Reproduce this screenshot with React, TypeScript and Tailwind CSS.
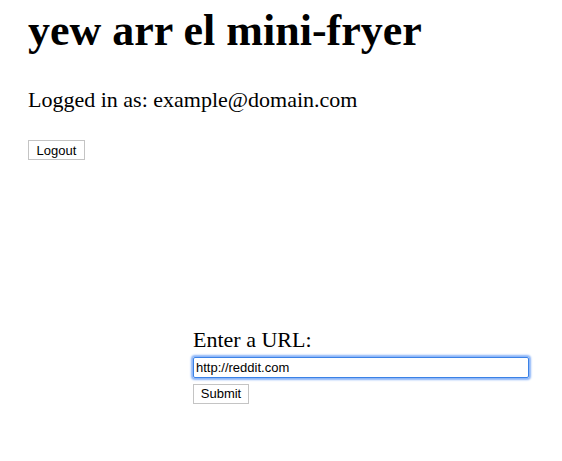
import React from "react";

const serif = "font-['Liberation_Serif','Times_New_Roman',serif]";
const sans = "font-['Liberation_Sans',Arial,sans-serif]";

const App = () => {
  return (
    <div className={`min-h-[461px] w-[562px] bg-white text-black ${serif}`}>
      <div className="pl-[28px] pt-[6px]">
        <h1 className="text-[44px] font-bold leading-[49px]">
          yew arr el mini-fryer
        </h1>
        <p className="mt-[33px] text-[22px] leading-[24px]">
          Logged in as: example@domain.com
        </p>
        <button
          className={`mt-[28px] h-[20px] w-[57px] border border-[#c4c4c4] bg-white text-[13px] leading-none ${sans}`}
        >
          Logout
        </button>
      </div>

      <form className="mt-[166px] ml-[193px] flex flex-col items-start">
        <label className="text-[22px] leading-[24px]">Enter a URL:</label>
        <input
          defaultValue="http://reddit.com"
          className={`mt-[5px] h-[21px] w-[336px] rounded-[2px] border border-[#3b82e6] px-[2px] text-[13px] shadow-[0_0_2px_2px_#8ab4f8] outline-none ${sans}`}
        />
        <button
          type="button"
          className={`mt-[6px] h-[20px] w-[56px] border border-[#c4c4c4] bg-white text-[13px] leading-none ${sans}`}
        >
          Submit
        </button>
      </form>
    </div>
  );
};

export default App;
